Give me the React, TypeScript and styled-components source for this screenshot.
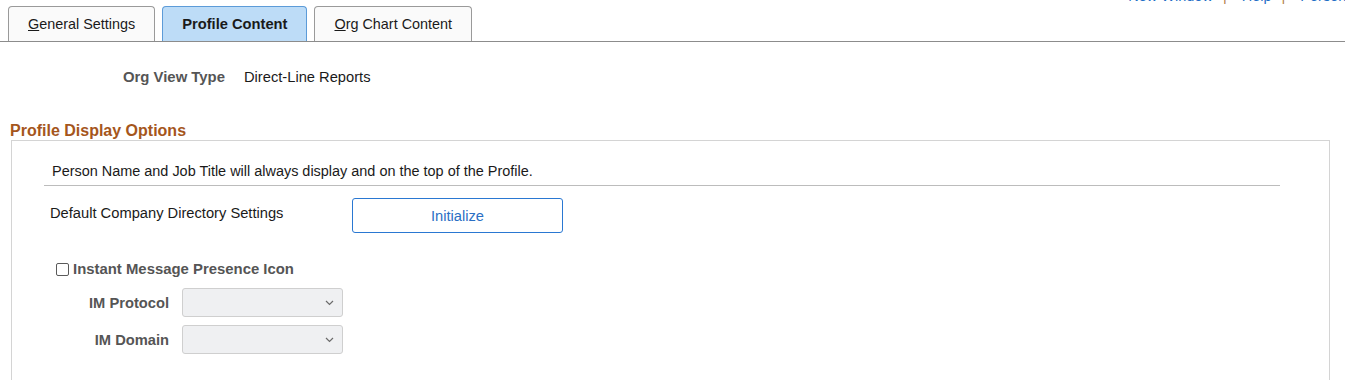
import styled, { createGlobalStyle } from 'styled-components'

const GlobalStyle = createGlobalStyle`
	html, body {
		margin: 0;
		padding: 0;
		overflow: hidden;
		background: #ffffff;
	}
	body {
		font-family: 'Liberation Sans', Arial, sans-serif;
		color: #222222;
	}
`

const tabs = [
	{ label: 'General Settings', key: 'G', active: false },
	{ label: 'Profile Content', key: '', active: true },
	{ label: 'Org Chart Content', key: 'O', active: false },
]

const links = ['New Window', 'Help', 'Personalize Page']

const Chevron = () => (
	<svg width='9' height='6' viewBox='0 0 9 6' fill='none'>
		<path d='M1 1l3.5 3.5L8 1' stroke='#6b6b6b' strokeWidth='1.2' />
	</svg>
)

export default function App() {
	return (
		<Page>
			<GlobalStyle />
			<TabBar>
				{tabs.map((tab) => (
					<Tab key={tab.label} $active={tab.active}>
						{tab.key ? (
							<>
								<AccessKey>{tab.key}</AccessKey>
								{tab.label.slice(1)}
							</>
						) : (
							tab.label
						)}
					</Tab>
				))}
				<Links>
					{links.map((link, i) => (
						<LinkItem key={link}>
							{i > 0 && <Separator>|</Separator>}
							<TopLink href='#'>{link}</TopLink>
						</LinkItem>
					))}
				</Links>
			</TabBar>

			<InfoRow>
				<InfoLabel>Org View Type</InfoLabel>
				<InfoValue>Direct-Line Reports</InfoValue>
			</InfoRow>

			<SectionTitle>Profile Display Options</SectionTitle>
			<Panel>
				<Notice>Person Name and Job Title will always display and on the top of the Profile.</Notice>

				<DefaultRow>
					<DefaultLabel>Default Company Directory Settings</DefaultLabel>
					<OutlineButton type='button'>Initialize</OutlineButton>
				</DefaultRow>

				<CheckRow>
					<CheckBox />
					<CheckLabel>Instant Message Presence Icon</CheckLabel>
				</CheckRow>

				<FieldList>
					<FieldRow>
						<FieldLabel>IM Protocol</FieldLabel>
						<SelectBox>
							<Chevron />
						</SelectBox>
					</FieldRow>
					<FieldRow>
						<FieldLabel>IM Domain</FieldLabel>
						<SelectBox>
							<Chevron />
						</SelectBox>
					</FieldRow>
				</FieldList>
			</Panel>
		</Page>
	)
}

const Page = styled.div`
	width: 1345px;
	height: 380px;
	overflow: hidden;
`

const TabBar = styled.div`
	display: flex;
	align-items: flex-end;
	gap: 7px;
	height: 42px;
	padding-left: 8px;
	border-bottom: 1px solid #8c8c8c;
	box-sizing: border-box;
`

const Tab = styled.div<{ $active: boolean }>`
	display: flex;
	align-items: center;
	height: 35px;
	padding: 0 19px;
	box-sizing: border-box;
	border: 1px solid ${(p) => (p.$active ? '#5c9bd8' : '#9a9a9a')};
	border-bottom: none;
	border-radius: 4px 4px 0 0;
	background: ${(p) => (p.$active ? '#bddcf7' : '#fafafa')};
	color: #1a1a1a;
	font-size: ${(p) => (p.$active ? '14.7px' : '14.4px')};
	font-weight: ${(p) => (p.$active ? 700 : 400)};
	white-space: nowrap;
	cursor: pointer;
`

const AccessKey = styled.span`
	text-decoration: underline;
`

const Links = styled.div`
	display: flex;
	align-self: flex-start;
	margin-left: auto;
	margin-top: -12px;
	margin-right: -69px;
	font-size: 14.5px;
	line-height: 16px;
	white-space: nowrap;
`

const LinkItem = styled.span`
	display: flex;
`

const Separator = styled.span`
	color: #b0804a;
	margin: 0 15px 0 10px;
`

const TopLink = styled.a`
	color: #1f6fc6;
	text-decoration: none;
`

const InfoRow = styled.div`
	display: grid;
	grid-template-columns: 225px auto;
	column-gap: 19px;
	align-items: center;
	margin-top: 26px;
	font-size: 14.7px;
	line-height: 18px;
`

const InfoLabel = styled.span`
	text-align: right;
	font-weight: 700;
	font-size: 14.9px;
	color: #555555;
`

const InfoValue = styled.span`
	color: #1a1a1a;
`

const SectionTitle = styled.h2`
	margin: 35px 0 0 10px;
	font-size: 16px;
	line-height: 19px;
	font-weight: 700;
	color: #a5561c;
`

const Panel = styled.div`
	margin: 0 15px 0 11px;
	height: 260px;
	border: 1px solid #d4d4d4;
	border-bottom: none;
`

const Notice = styled.div`
	margin: 21px 49px 0 32px;
	padding: 0 0 5px 8px;
	border-bottom: 1px solid #bcbcbc;
	font-size: 14.45px;
	line-height: 18px;
	color: #1a1a1a;
`

const DefaultRow = styled.div`
	display: grid;
	grid-template-columns: 302px 211px;
	align-items: start;
	margin-top: 12px;
	padding-left: 38px;
`

const DefaultLabel = styled.span`
	padding-top: 6px;
	font-size: 14.7px;
	line-height: 18px;
	color: #1a1a1a;
`

const OutlineButton = styled.button`
	height: 35px;
	border: 1px solid #2a78d2;
	border-radius: 3px;
	background: #ffffff;
	color: #2a6fc4;
	font-family: 'Liberation Sans', Arial, sans-serif;
	font-size: 14.7px;
	cursor: pointer;
`

const CheckRow = styled.div`
	display: flex;
	align-items: center;
	gap: 4px;
	margin-top: 27px;
	padding-left: 44px;
`

const CheckBox = styled.span`
	width: 13px;
	height: 13px;
	box-sizing: border-box;
	border: 1px solid #5a5a5a;
	border-radius: 2px;
	background: #ffffff;
`

const CheckLabel = styled.span`
	font-size: 14.9px;
	line-height: 18px;
	font-weight: 700;
	color: #555555;
`

const FieldList = styled.div`
	display: flex;
	flex-direction: column;
	gap: 8px;
	margin-top: 10px;
`

const FieldRow = styled.div`
	display: grid;
	grid-template-columns: 157px 161px;
	column-gap: 13px;
	align-items: center;
`

const FieldLabel = styled.span`
	text-align: right;
	font-size: 14.7px;
	font-weight: 700;
	color: #555555;
`

const SelectBox = styled.div`
	display: flex;
	align-items: center;
	justify-content: flex-end;
	height: 29px;
	padding-right: 8px;
	box-sizing: border-box;
	border: 1px solid #cfcfcf;
	border-radius: 3px;
	background: #eff0f2;
`
